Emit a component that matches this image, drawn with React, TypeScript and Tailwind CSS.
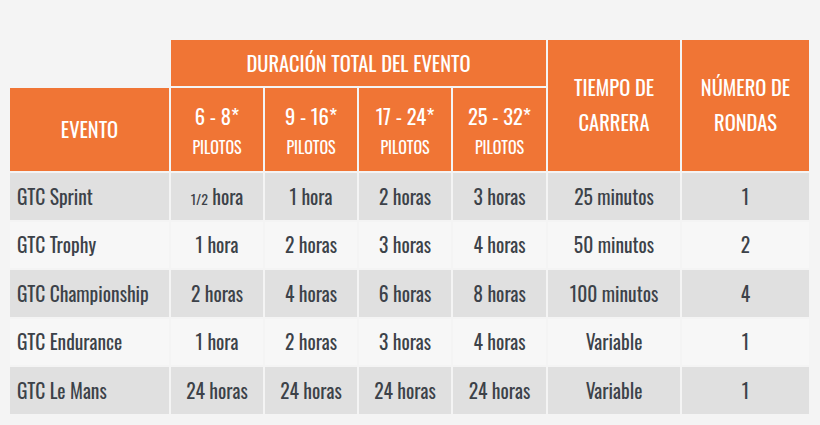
const rows: { name: string; cells: React.ReactNode[] }[] = [
  {
    name: 'GTC Sprint',
    cells: [
      <span key="h">
        <span className="text-[14px]">1/2</span> hora
      </span>,
      '1 hora',
      '2 horas',
      '3 horas',
      '25 minutos',
      '1',
    ],
  },
  { name: 'GTC Trophy', cells: ['1 hora', '2 horas', '3 horas', '4 horas', '50 minutos', '2'] },
  { name: 'GTC Championship', cells: ['2 horas', '4 horas', '6 horas', '8 horas', '100 minutos', '4'] },
  { name: 'GTC Endurance', cells: ['1 hora', '2 horas', '3 horas', '4 horas', 'Variable', '1'] },
  { name: 'GTC Le Mans', cells: ['24 horas', '24 horas', '24 horas', '24 horas', 'Variable', '1'] },
];

const pilots = ['6 - 8*', '9 - 16*', '17 - 24*', '25 - 32*'];

export default function App() {
  return (
    <div className="w-[820px] h-[425px] bg-[#f4f4f4] pt-[40px] pl-[10px] font-['Oswald',sans-serif]">
      <div className="grid grid-cols-[159px_92px_92px_92px_93px_132px_127px] grid-rows-[46px_83px_repeat(5,46.5px)] gap-[2px] w-[799px]">
        <div className="col-start-1 row-start-1" />
        <div className="col-start-2 col-span-4 row-start-1 bg-[#f07535] text-white text-[20.5px] flex items-center justify-center">
          DURACIÓN TOTAL DEL EVENTO
        </div>
        <div className="col-start-6 row-start-1 row-span-2 bg-[#f07535] text-white text-[20.5px] leading-[35px] flex flex-col items-center justify-center pb-[2px]">
          <span>TIEMPO DE</span>
          <span>CARRERA</span>
        </div>
        <div className="col-start-7 row-start-1 row-span-2 bg-[#f07535] text-white text-[20.5px] leading-[35px] flex flex-col items-center justify-center pb-[2px]">
          <span>NÚMERO DE</span>
          <span>RONDAS</span>
        </div>
        <div className="col-start-1 row-start-2 bg-[#f07535] text-white text-[20.5px] flex items-center justify-center">
          EVENTO
        </div>
        {pilots.map((p, i) => (
          <div
            key={p}
            className={`row-start-2 bg-[#f07535] text-white flex flex-col items-center justify-center pt-[4px] ${
              ['col-start-2', 'col-start-3', 'col-start-4', 'col-start-5'][i]
            }`}
          >
            <span className="text-[20.5px] leading-[31px]">{p}</span>
            <span className="text-[16px] leading-[31px]">PILOTOS</span>
          </div>
        ))}
        {rows.map((r, ri) => {
          const bg = ri % 2 === 0 ? 'bg-[#e0e0e0]' : 'bg-[#f7f7f7]';
          return [
            <div key={r.name} className={`${bg} text-[#3c4249] text-[19.5px] flex items-center pl-[7px]`}>
              {r.name}
            </div>,
            ...r.cells.map((c, ci) => (
              <div key={r.name + ci} className={`${bg} text-[#3c4249] text-[19.5px] flex items-center justify-center`}>
                {c}
              </div>
            )),
          ];
        })}
      </div>
    </div>
  );
}
